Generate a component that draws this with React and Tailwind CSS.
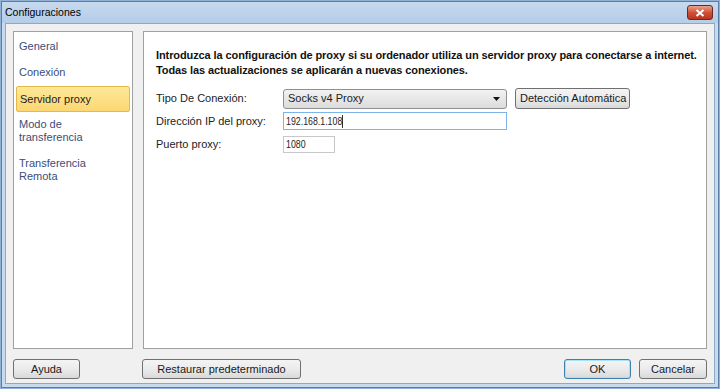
import React from "react";

const navItems = [
  { label: ["General"] },
  { label: ["Conexión"] },
  { label: ["Servidor proxy"], active: true },
  { label: ["Modo de", "transferencia"] },
  { label: ["Transferencia", "Remota"] },
];

const Button = ({ children, className = "", primary = false }) => (
  <button
    className={`h-[20px] whitespace-nowrap rounded-[3px] border text-[11px] text-[#1a1a1a] bg-gradient-to-b from-[#f4f4f4] via-[#ebebeb] to-[#d9d9d9] ${
      primary ? "border-[#3c7fb1] shadow-[inset_0_0_0_1px_#a6e2f8]" : "border-[#707070]"
    } ${className}`}
  >
    {children}
  </button>
);

export default function App() {
  return (
    <div
      className="w-[720px] h-[389px] bg-[#8fb2d6] p-[1px] overflow-hidden"
      style={{ fontFamily: '"Liberation Sans", Arial, sans-serif' }}
    >
      <div className="w-full h-full flex flex-col border border-[#5a7ea6] bg-[#c9daec]">
        {/* title bar */}
        <div className="h-[21px] flex items-center justify-between pl-[3px] pr-[5px] bg-gradient-to-b from-[#c6d9ee] to-[#b5cde8]">
          <span className="text-[10.5px] text-black">Configuraciones</span>
          <div className="w-[26px] h-[15px] rounded-[3px] border border-[#6e2a20] bg-gradient-to-b from-[#e9a08c] via-[#cf5237] to-[#b8331b] flex items-center justify-center">
            <svg width="10" height="8" viewBox="0 0 10 8">
              <path d="M1.5 1 L8.5 7 M8.5 1 L1.5 7" stroke="white" strokeWidth="2" />
            </svg>
          </div>
        </div>

        {/* body */}
        <div className="flex-1 mx-[3px] mb-[3px] border border-[#8ea8c4] bg-[#f0f0f0] flex flex-col px-[7px] pt-[7px]">
          <div className="flex gap-[10px] h-[318px]">
            <div className="w-[120px] border border-[#a0a0a0] bg-white pt-[2px] px-[2px]">
              {navItems.map((item, i) => (
                <div
                  key={i}
                  className={`px-[3px] text-[11px] leading-[13px] ${
                    item.active
                      ? "h-[26px] flex items-center rounded-[2px] border border-[#e5b94c] bg-gradient-to-b from-[#fee896] to-[#fcd774] text-[#222]"
                      : "py-[6px] mb-[1px] text-[#3a4d7a]"
                  }`}
                >
                  <div>
                    {item.label.map((l) => (
                      <div key={l}>{l}</div>
                    ))}
                  </div>
                </div>
              ))}
            </div>

            <div className="flex-1 border border-[#a0a0a0] bg-white pl-[12px] pt-[16px]">
              <p className="text-[11px] font-bold leading-[15px] text-[#111] whitespace-nowrap tracking-[-0.1px]">
                Introduzca la configuración de proxy si su ordenador utiliza un servidor proxy para conectarse a internet.
                <br />
                Todas las actualizaciones se aplicarán a nuevas conexiones.
              </p>

              <div className="mt-[10px] flex flex-col gap-[3px] text-[11px] text-[#222]">
                <div className="flex items-center h-[21px]">
                  <span className="w-[127px]">Tipo De Conexión:</span>
                  <div className="w-[224px] h-[20px] rounded-[3px] border border-[#8e8f8f] bg-gradient-to-b from-[#f2f2f2] to-[#dcdcdc] flex items-center justify-between pl-[4px] pr-[6px]">
                    <span>Socks v4 Proxy</span>
                    <svg width="7" height="4" viewBox="0 0 7 4">
                      <path d="M0 0 H7 L3.5 4 Z" fill="#111" />
                    </svg>
                  </div>
                  <Button className="ml-[8px] w-[115px] h-[21px] px-[4px]">Detección Automática</Button>
                </div>
                <div className="flex items-center h-[18px]">
                  <span className="w-[127px]">Dirección IP del proxy:</span>
                  <div className="w-[224px] h-[18px] border border-[#7eb4ea] bg-white flex items-center pl-[2px]">
                    <div className="flex items-center scale-x-[0.8] origin-left">
                      192.168.1.108<span className="w-[1px] h-[13px] bg-black" />
                    </div>
                  </div>
                </div>
                <div className="flex items-center h-[18px] mt-[2px]">
                  <span className="w-[127px]">Puerto proxy:</span>
                  <div className="w-[52px] h-[17px] border border-[#c8c8c8] bg-white flex items-center pl-[2px]">
                    <span className="scale-x-[0.8] origin-left">1080</span>
                  </div>
                </div>
              </div>
            </div>
          </div>

          <div className="flex items-center mt-[10px]">
            <Button className="w-[67px]">Ayuda</Button>
            <Button className="ml-[62px] w-[159px]">Restaurar predeterminado</Button>
            <div className="flex-1" />
            <Button primary className="w-[67px]">OK</Button>
            <Button className="ml-[8px] w-[68px]">Cancelar</Button>
          </div>
        </div>
      </div>
    </div>
  );
}
